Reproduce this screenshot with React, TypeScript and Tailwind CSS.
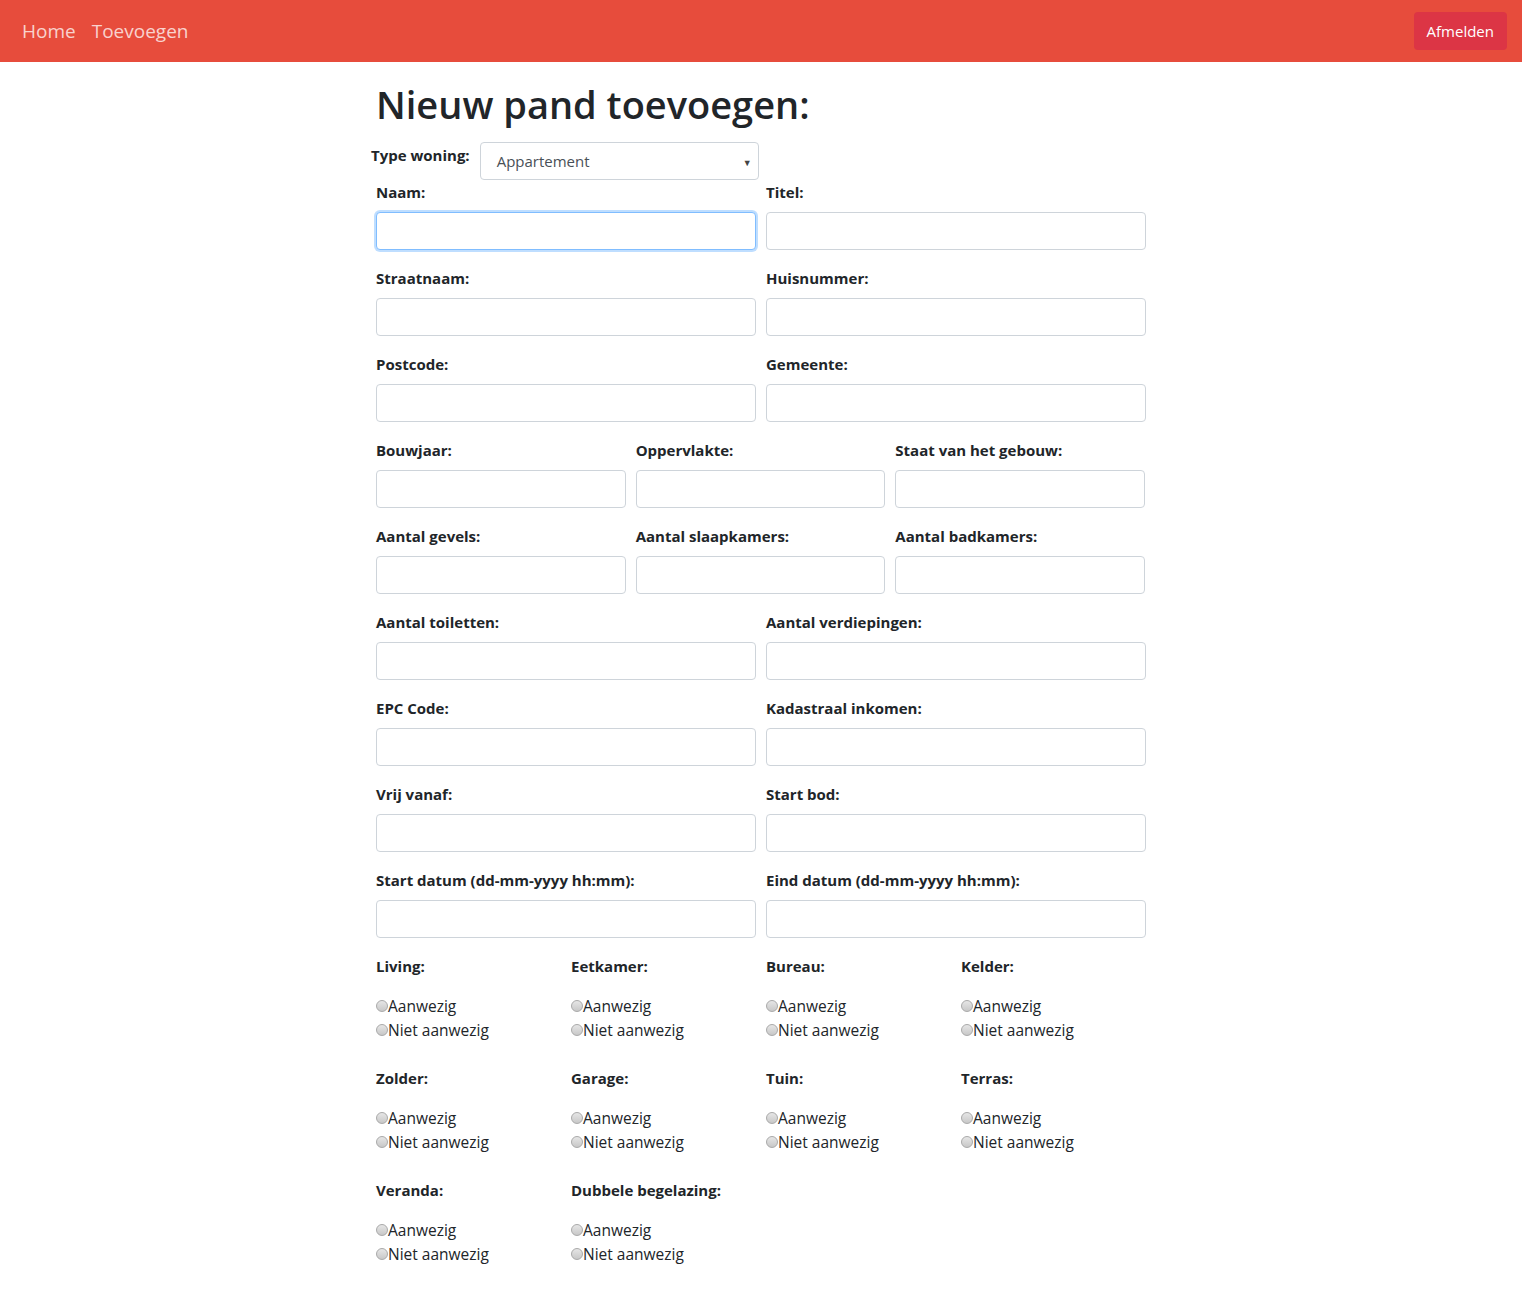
import React from "react";

const font = { fontFamily: '"Open Sans", "Noto Sans", sans-serif' };

function Field({ label, focused = false }: { label: string; focused?: boolean }) {
  return (
    <div className="flex flex-col">
      <label className="h-[20px] text-[15px] leading-[20px] font-bold text-[#212529]">{label}</label>
      <input
        type="text"
        className={
          focused
            ? "mt-[10px] h-[38px] w-full rounded-[4px] border border-[#80bdff] shadow-[0_0_0_2px_rgba(0,123,255,0.25)] outline-none bg-white"
            : "mt-[10px] h-[38px] w-full rounded-[4px] border border-[#ced4da] outline-none bg-white"
        }
      />
    </div>
  );
}

function Radio({ label }: { label: string }) {
  return (
    <label className="flex items-center h-[24px] text-[15.5px] text-[#212529]">
      <span className="w-[12px] h-[12px] rounded-full border border-[#a9a9a9] bg-gradient-to-b from-[#e6e6e6] to-[#c8c8c8] mb-[3px]" />
      <span>{label}</span>
    </label>
  );
}

function Room({ label }: { label: string }) {
  return (
    <div className="flex flex-col">
      <div className="h-[20px] text-[15px] leading-[20px] font-bold text-[#212529]">{label}</div>
      <div className="mt-[19px] flex flex-col">
        <Radio label="Aanwezig" />
        <Radio label="Niet aanwezig" />
      </div>
    </div>
  );
}

const rows: string[][] = [
  ["Straatnaam:", "Huisnummer:"],
  ["Postcode:", "Gemeente:"],
  ["Bouwjaar:", "Oppervlakte:", "Staat van het gebouw:"],
  ["Aantal gevels:", "Aantal slaapkamers:", "Aantal badkamers:"],
  ["Aantal toiletten:", "Aantal verdiepingen:"],
  ["EPC Code:", "Kadastraal inkomen:"],
  ["Vrij vanaf:", "Start bod:"],
  ["Start datum (dd-mm-yyyy hh:mm):", "Eind datum (dd-mm-yyyy hh:mm):"],
];

const rooms = [
  "Living:", "Eetkamer:", "Bureau:", "Kelder:",
  "Zolder:", "Garage:", "Tuin:", "Terras:",
  "Veranda:", "Dubbele begelazing:",
];

export default function App() {
  return (
    <div className="min-h-screen bg-white" style={font}>
      <nav className="h-[62px] bg-[#e74c3c] flex items-center justify-between pl-[22px] pr-[15px]">
        <div className="flex items-center gap-[16px] text-[19px] text-white/75">
          <a href="#">Home</a>
          <a href="#">Toevoegen</a>
        </div>
        <button className="h-[38px] px-[13px] rounded-[4px] bg-[#dc3545] text-white text-[15px]">Afmelden</button>
      </nav>

      <div className="w-[770px] ml-[376px] pt-[18px] pb-[40px]">
        <h1 className="text-[38px] leading-[48px] font-semibold text-[#212529]">Nieuw pand toevoegen:</h1>

        <div className="mt-[14px] flex items-start -ml-[5px]">
          <label className="text-[15px] font-bold text-[#212529] leading-[20px] pt-[3px] mr-[10px]">Type woning:</label>
          <div className="relative w-[279px] h-[38px] rounded-[4px] border border-[#ced4da] flex items-center pl-[16px] text-[15px] text-[#495057]">
            Appartement
            <span className="absolute right-[6px] top-[13px] text-[9px] text-[#444]">▼</span>
          </div>
        </div>

        <div className="mt-[2px] grid grid-cols-2 gap-x-[10px]">
          <Field label="Naam:" focused />
          <Field label="Titel:" />
        </div>

        {rows.map((r, i) => (
          <div
            key={i}
            className={
              r.length === 3
                ? "mt-[18px] grid grid-cols-3 gap-x-[10px] w-[769px]"
                : "mt-[18px] grid grid-cols-2 gap-x-[10px]"
            }
          >
            {r.map((l) => (
              <Field key={l} label={l} />
            ))}
          </div>
        ))}

        <div className="mt-[18px] grid grid-cols-4 gap-y-[25px] w-[780px]">
          {rooms.map((r) => (
            <Room key={r} label={r} />
          ))}
        </div>

        <div className="mt-[25px]">
          <label className="h-[20px] text-[15px] leading-[20px] font-bold text-[#212529]">Beschrijving:</label>
        </div>
      </div>
    </div>
  );
}
